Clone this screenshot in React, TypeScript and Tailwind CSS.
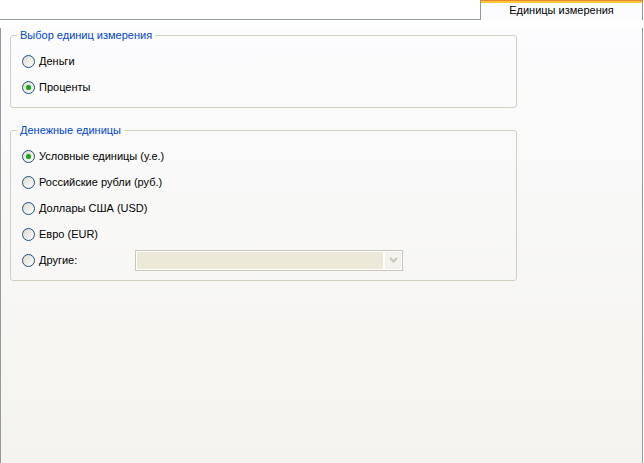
const font = { fontFamily: '"Liberation Sans", Arial, sans-serif' };

const Radio: React.FC<{ checked?: boolean }> = ({ checked }) => (
  <span className="relative flex h-[13px] w-[13px] shrink-0 items-center justify-center rounded-full border border-[#1c5180] bg-linear-to-br from-[#dcd9ce] to-[#ffffff]">
    {checked && <span className="h-[5px] w-[5px] rounded-full bg-[#21a121] shadow-[0_0_1px_#7fd47f]" />}
  </span>
);

const Option: React.FC<{ label: string; checked?: boolean; children?: React.ReactNode }> = ({
  label,
  checked,
  children,
}) => (
  <div className="flex h-[26px] items-center">
    <label className="flex w-[113px] items-center gap-[4px]">
      <Radio checked={checked} />
      <span className="whitespace-nowrap">{label}</span>
    </label>
    {children}
  </div>
);

const Group: React.FC<{ title: string; children: React.ReactNode; className?: string }> = ({
  title,
  children,
  className,
}) => (
  <fieldset className={`ml-[9px] w-[507px] rounded-[3px] border border-[#d0d0bf] px-[6px] ${className ?? ''}`}>
    <legend className="px-[3px] text-[11px] leading-[14px] text-[#0046d5]">{title}</legend>
    <div className="pl-[5px] pt-[6px] pb-[7px]">{children}</div>
  </fieldset>
);

const App: React.FC = () => {
  return (
    <div className="h-[463px] w-[644px] bg-white text-[11px] leading-[13px] text-black" style={font}>
      <div className="flex h-[20px]">
        <div className="flex-1 border-b border-[#919b9c]" />
        <div className="flex w-[163px] flex-col border-r border-l border-[#919b9c] bg-[#fcfcfe]">
          <div className="h-px bg-[#e68b2c]" />
          <div className="h-[2px] bg-[#ffc73c]" />
          <div className="flex flex-1 items-center justify-center pb-[2px]">Единицы измерения</div>
        </div>
        <div className="w-px" />
      </div>
      <div className="h-[442px] w-[643px] border-r border-b border-l border-[#919b9c] bg-linear-to-b from-[#fcfcfe] to-[#f4f3ee]">
        <Group title="Выбор единиц измерения" className="mt-[8px]">
          <Option label="Деньги" />
          <Option label="Проценты" checked />
        </Group>
        <Group title="Денежные единицы" className="mt-[15px]">
          <Option label="Условные единицы (у.е.)" checked />
          <Option label="Российские рубли (руб.)" />
          <Option label="Доллары США (USD)" />
          <Option label="Евро (EUR)" />
          <Option label="Другие:">
            <div className="flex h-[21px] w-[268px] border border-[#c9c7ba] bg-white p-[1px]">
              <div className="flex-1 bg-[#ece9d8]" />
              <div className="ml-[2px] flex w-[16px] items-center justify-center rounded-[2px] border border-[#f0efe8] bg-[#f3f2ec]">
                <svg width="9" height="6" viewBox="0 0 9 6">
                  <path d="M1 1 L4.5 4.5 L8 1" fill="none" stroke="#c9c7ba" strokeWidth="2" />
                </svg>
              </div>
            </div>
          </Option>
        </Group>
      </div>
    </div>
  );
};

export default App;
